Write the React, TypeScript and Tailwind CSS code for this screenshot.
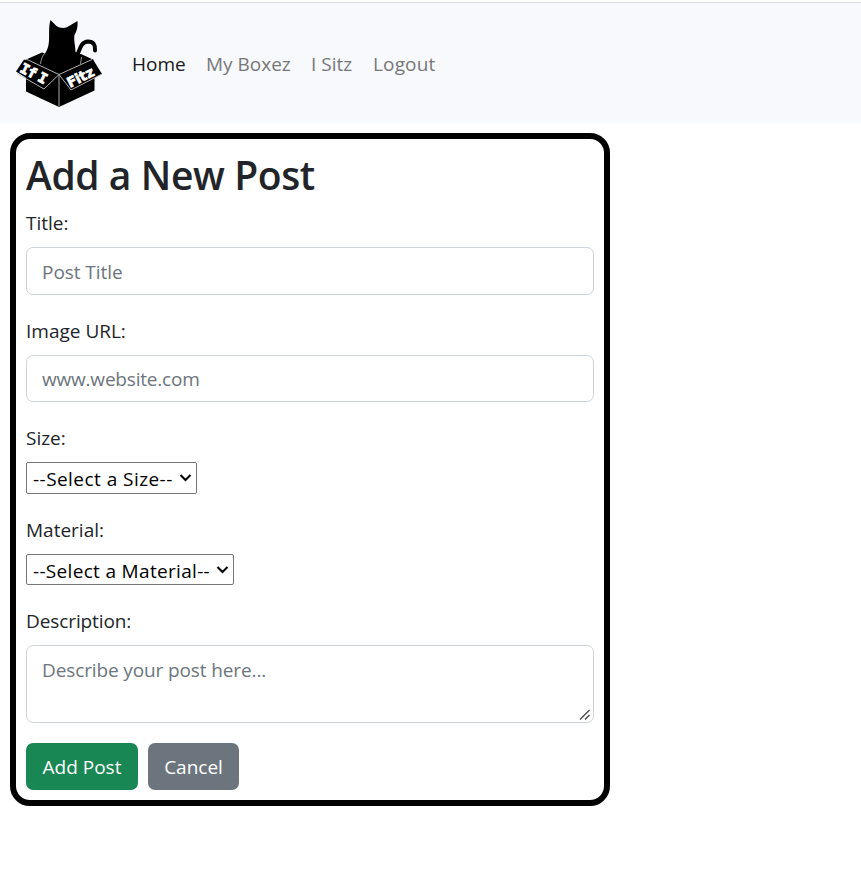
import React from "react";

function Logo() {
  return (
    <svg className="h-[90px] w-[88px]" viewBox="15 18 88 90" role="img" aria-label="If I Fitz">
      <path d="M26 74L59 67L94.500 74V90.500L59 107L26 91.500Z" fill="#000" />
      <path d="M25 60L42 52.500L59 57L81 54L94 60L59 80Z" fill="#000" />
      <path
        d="M40 64C42 56 47 53 48.500 45C50 38 48 28 50.500 20L56.500 26C60 28.500 66 28.500 69 26L77.500 21C78 26 77 31 74.500 35C73.500 40 75.500 46 75.500 52C81 54 81 60 81 65L59 76Z"
        fill="#000"
      />
      <path d="M76 57C80 53 79 42 88 41.500C93.500 41.500 95.500 45 95 50.500" fill="none" stroke="#000" strokeWidth="4" strokeLinecap="round" />
      <path d="M40.500 64C41 59 42.500 56 45 53M80.500 64L81.500 57" fill="none" stroke="#bbb" strokeWidth=".8" />
      <path d="M24 59.500L59 74.500L44 89L16 71.500Z" fill="#000" />
      <path d="M59 74.500L93 59.500L102 74L71 90.500Z" fill="#000" />
      <path
        d="M26 59L59 74.500L44 89L17 73.500M92 59.500L59 74.500L71 90L101 74.500"
        fill="none"
        stroke="#c4c4c4"
        strokeWidth=".9"
      />
      <path d="M59 75V106.500" stroke="#aaa" strokeWidth="1" />
      <text
        transform="translate(19 71.500) rotate(27)"
        x="0 8 20"
        fill="#fff"
        stroke="#fff"
        strokeWidth=".9"
        className="font-['DejaVu_Sans_Mono',monospace] text-[14px] font-bold"
      >
        IfI
      </text>
      <text
        transform="translate(70 88) rotate(-27)"
        x="0 9 13.500 20.500"
        fill="#fff"
        stroke="#fff"
        strokeWidth=".6"
        className="font-['DejaVu_Sans',sans-serif] text-[14px] font-bold"
      >
        Fitz
      </text>
    </svg>
  );
}

function Picker({ name, label, boxClass }: { name: string; label: string; boxClass: string }) {
  return (
    <div className={"relative " + boxClass}>
      <select
        aria-label={name}
        className="block h-full w-full appearance-none rounded-[2px] border border-[#767676] bg-white pt-px pl-[6px] text-black"
      >
        <option>{label}</option>
      </select>
      <svg className="pointer-events-none absolute top-[12px] right-[5px] h-[8px] w-[13px]" viewBox="0 0 13 8">
        <path d="M1.500 1L6.500 6L11.500 1" fill="none" stroke="#000" strokeWidth="2" />
      </svg>
    </div>
  );
}

export default function App() {
  return (
    <div className="min-h-[889px] bg-white pt-[2px] font-['Open_Sans','Noto_Sans',sans-serif] text-[19px] leading-[30px] text-[#212529]">
      <nav className="flex h-[121px] items-center border-t border-[#d8dbdf] bg-[#f8f9fc] pl-[15px]">
        <Logo />
        <div className="ml-[29px] flex gap-[20px] pt-[2px] text-[#777879]">
          <a className="w-[54px] whitespace-nowrap text-[#16181a]">Home</a>
          <a className="w-[85px] whitespace-nowrap">My Boxez</a>
          <a className="w-[42px] whitespace-nowrap">I Sitz</a>
          <a className="tracking-[0.15px] whitespace-nowrap">Logout</a>
        </div>
      </nav>

      <form className="mt-[10px] ml-[10px] flex h-[673px] w-[600px] flex-col rounded-[20px] border-[6px] border-black p-[10px]">
        <h1 className="h-[59px] text-[39px] leading-[52px] font-semibold tracking-[-0.4px] whitespace-nowrap">Add a New Post</h1>

        <label className="h-[39px]">Title:</label>
        <input
          className="h-[48px] w-full rounded-[7px] border border-[#ced4da] px-[15px] pt-[2px] tracking-[-0.05px] placeholder:text-[#6c757d]"
          placeholder="Post Title"
        />

        <label className="mt-[21px] h-[39px]">Image URL:</label>
        <input
          className="h-[47px] w-full rounded-[7px] border border-[#ced4da] px-[15px] tracking-[-0.2px] placeholder:text-[#6c757d]"
          placeholder="www.website.com"
        />

        <label className="mt-[21px] h-[39px]">Size:</label>
        <Picker name="Size" label="--Select a Size--" boxClass="h-[32px] w-[171px] tracking-[0.45px]" />

        <label className="mt-[21px] h-[39px]">Material:</label>
        <Picker name="Material" label="--Select a Material--" boxClass="h-[31px] w-[208px] tracking-[0.32px]" />

        <label className="mt-[21px] h-[39px] tracking-[-0.1px]">Description:</label>
        <div className="relative">
          <textarea
            className="block h-[78px] w-full resize-none rounded-[7px] border border-[#ced4da] px-[15px] py-[9px] tracking-[-0.12px] placeholder:text-[#6c757d]"
            placeholder="Describe your post here..."
          />
          <svg className="pointer-events-none absolute right-[3px] bottom-[2px] h-[12px] w-[12px]" viewBox="0 0 12 12">
            <path d="M1 10.500L10.500 1M6 10.500L10.500 6" stroke="#444" strokeWidth="1.300" />
          </svg>
        </div>

        <div className="mt-[20px] flex gap-[10px] text-white">
          <button type="button" className="h-[47px] w-[112px] rounded-[7px] bg-[#198754] whitespace-nowrap">
            Add Post
          </button>
          <button type="button" className="h-[47px] w-[91px] rounded-[7px] bg-[#6c757d] whitespace-nowrap">
            Cancel
          </button>
        </div>
      </form>
    </div>
  );
}
